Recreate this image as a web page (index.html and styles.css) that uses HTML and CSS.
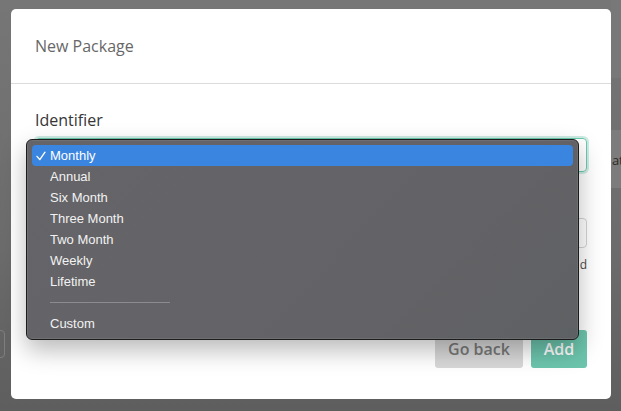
FILE: index.html
```html
<!DOCTYPE html>
<html>
<head>
<meta charset="utf-8">
<link rel="stylesheet" href="styles.css">
</head>
<body>
<div class="backdrop">
  <div class="bg-right-top"></div>
  <div class="bg-right-mid"><span>at</span></div>
  <div class="bg-left-btn"></div>
</div>
<div class="modal">
  <div class="modal-header">New Package</div>
  <div class="modal-body">
    <label class="label">Identifier</label>
    <div class="select focused"></div>
    <div class="spacer"></div>
    <div class="input"></div>
    <p class="help">d</p>
  </div>
  <div class="modal-footer">
    <button class="btn btn-back">Go back</button>
    <button class="btn btn-add">Add</button>
  </div>

  <div class="menu">
    <div class="item selected">
      <svg class="check" width="10" height="10" viewBox="0 0 10 10"><path d="M1 5.4 L3.8 8.6 L9 1.2" fill="none" stroke="#fff" stroke-width="1.4" stroke-linecap="round" stroke-linejoin="round"/></svg>
      Monthly
    </div>
    <div class="item">Annual</div>
    <div class="item">Six Month</div>
    <div class="item">Three Month</div>
    <div class="item">Two Month</div>
    <div class="item">Weekly</div>
    <div class="item">Lifetime</div>
    <div class="sep"><span></span></div>
    <div class="item">Custom</div>
  </div>
</div>
</body>
</html>
```
FILE: styles.css
```css
html, body {
  margin: 0;
  padding: 0;
}
body {
  width: 621px;
  height: 411px;
  overflow: hidden;
  position: relative;
  background: linear-gradient(180deg, #767676 0%, #6c6c6c 60%, #5d5e5d 100%);
  font-family: "Open Sans", "Liberation Sans", sans-serif;
}
.backdrop {
  position: absolute;
  inset: 0;
}
.bg-right-top {
  position: absolute;
  left: 611px;
  top: 0;
  width: 10px;
  height: 78px;
  background: #787878;
}
.bg-right-mid {
  position: absolute;
  left: 611px;
  top: 130px;
  width: 10px;
  height: 58px;
  background: #7c7c7c;
  overflow: hidden;
}
.bg-right-mid span {
  position: absolute;
  left: 1px;
  top: 21px;
  font-size: 13px;
  letter-spacing: -0.3px;
  color: #2a2a2a;
}
.bg-left-btn {
  position: absolute;
  left: -10px;
  top: 330px;
  width: 13px;
  height: 26px;
  border: 1px solid #7f7f7f;
  border-radius: 4px;
}
.modal {
  position: relative;
  margin: 9px 0 0 11px;
  width: 600px;
  height: 390px;
  background: #fff;
  border-radius: 5px;
  display: flex;
  flex-direction: column;
}
.modal-header {
  height: 74px;
  border-bottom: 1px solid #dcdcdc;
  display: flex;
  align-items: center;
  padding-left: 24px;
  font-size: 16px;
  color: #676767;
}
.modal-body {
  padding: 24px 24px 0 24px;
  display: flex;
  flex-direction: column;
}
.label {
  font-size: 16px;
  line-height: 24px;
  color: #363636;
}
.spacer {
  height: 38px;
}
.select {
  margin-top: 6px;
  height: 32px;
  border: 1px solid #6cc9ae;
  border-radius: 4px;
  box-shadow: 0 0 0 2px rgba(108, 201, 174, 0.35);
}
.input {
  margin-top: 8px;
  height: 28px;
  border: 1px solid #d4d4d4;
  border-radius: 4px;
}
.help {
  margin: 8px 0 0 0;
  text-align: right;
  font-size: 12px;
  color: #4a4a4a;
}
.modal-footer {
  margin-top: auto;
  padding: 0 24px 31px 0;
  display: flex;
  justify-content: flex-end;
  gap: 8px;
}
.btn {
  border: none;
  height: 38px;
  border-radius: 3px;
  font-family: "Open Sans", "Liberation Sans", sans-serif;
  font-size: 16px;
  font-weight: 600;
  padding: 0;
}
.btn-back {
  width: 88px;
  background: #d8d8d8;
  color: #777;
}
.btn-add {
  width: 56px;
  background: #6cc5ad;
  color: #fff;
}
.menu {
  position: absolute;
  left: 15px;
  top: 130px;
  width: 541px;
  padding: 5px 5px 5px 5px;
  background: linear-gradient(135deg, #656468 0%, #636266 70%, #5e6163 100%);
  border: 1px solid #1c1c1c;
  border-radius: 6px;
  box-shadow: inset 0 0 0 1px rgba(255,255,255,0.08), 0 10px 24px rgba(0,0,0,0.28);
  font-family: "Liberation Sans", Arial, sans-serif;
  font-size: 13px;
  color: #f2f2f2;
}
.item {
  height: 21px;
  line-height: 21px;
  padding-left: 18px;
  border-radius: 4px;
  position: relative;
}
.item.selected {
  background: #3a85df;
  color: #fff;
}
.check {
  position: absolute;
  left: 4px;
  top: 6px;
}
.sep {
  height: 21px;
  display: flex;
  align-items: center;
  padding-left: 18px;
}
.sep span {
  display: block;
  width: 120px;
  height: 1px;
  background: #8c8b8f;
}
```
